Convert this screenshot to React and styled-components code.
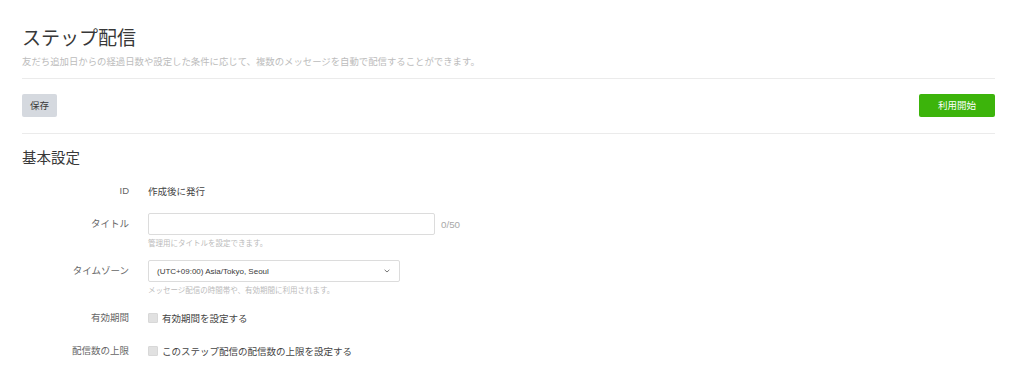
import React from "react";
import styled, { createGlobalStyle } from "styled-components";

const GlobalStyle = createGlobalStyle`
  html, body { margin: 0; padding: 0; background: #fff; }
  body {
    font-family: "Liberation Sans", "Noto Sans CJK JP", sans-serif;
    color: #333;
    -webkit-font-smoothing: antialiased;
  }
`;

const Page = styled.div`
  padding: 0 29px 0 22px;
`;

const Header = styled.header`
  padding-top: 25px;
  padding-bottom: 10px;
  border-bottom: 1px solid #ebebeb;
`;

const Title = styled.h1`
  margin: 0;
  font-family: "Noto Sans CJK JP", sans-serif;
  font-size: 19px;
  font-weight: 400;
  line-height: 24px;
  color: #383838;
`;

const Subtitle = styled.p`
  margin: 6px 0 0;
  font-family: "Noto Sans CJK JP", sans-serif;
  font-size: 9.4px;
  line-height: 13px;
  color: #bcbcbc;
`;

const Toolbar = styled.div`
  display: flex;
  justify-content: space-between;
  align-items: center;
  padding: 15px 0 16px;
  border-bottom: 1px solid #ebebeb;
`;

const Button = styled.button`
  height: 23px;
  min-width: ${(p) => (p.$primary ? "76px" : "35px")};
  padding: 0 8px;
  border: 0;
  border-radius: 2px;
  font-family: "Noto Sans CJK JP", sans-serif;
  font-size: 9.5px;
  line-height: 23px;
  background: ${(p) => (p.$primary ? "#3cb40b" : "#d5d9df")};
  color: ${(p) => (p.$primary ? "#fff" : "#3a3a3a")};
  cursor: pointer;
`;

const Section = styled.section`
  padding-top: 13px;
`;

const SectionTitle = styled.h2`
  margin: 0 0 13px;
  font-family: "Noto Sans CJK JP", sans-serif;
  font-size: 14.5px;
  font-weight: 400;
  line-height: 20px;
  color: #383838;
`;

const Form = styled.div`
  display: grid;
  grid-template-columns: 107px 1fr;
  column-gap: 19px;
  row-gap: 11px;
  align-items: start;
`;

const Label = styled.div`
  text-align: right;
  font-family: "Liberation Sans", "Noto Sans CJK JP", sans-serif;
  font-size: 9.5px;
  line-height: 22px;
  color: #666;
`;

const Field = styled.div`
  display: flex;
  flex-direction: column;
`;

const Line = styled.div`
  display: flex;
  align-items: center;
  min-height: 22px;
`;

const Value = styled.span`
  font-family: "Noto Sans CJK JP", sans-serif;
  font-size: 9.5px;
  line-height: 22px;
  color: #444;
`;

const TextInput = styled.input`
  box-sizing: border-box;
  width: ${(p) => p.$width}px;
  height: 22px;
  margin: 0;
  padding: 0 8px;
  border: 1px solid #dcdcdc;
  border-radius: 2px;
  outline: none;
  font-size: 9px;
`;

const Counter = styled.span`
  margin-left: 6px;
  font-family: "Liberation Sans", sans-serif;
  font-size: 9.8px;
  color: #a8a8a8;
`;

const Help = styled.div`
  margin-top: 2px;
  font-family: "Noto Sans CJK JP", sans-serif;
  font-size: 7.5px;
  line-height: 12px;
  color: #bbbbbb;
`;

const Select = styled.div`
  box-sizing: border-box;
  width: ${(p) => p.$width}px;
  height: 22px;
  display: flex;
  align-items: center;
  justify-content: space-between;
  padding: 0 9px 0 8px;
  border: 1px solid #dcdcdc;
  border-radius: 2px;
  font-family: "Liberation Sans", sans-serif;
  font-size: 8px;
  color: #3a3a3a;
`;

const Check = styled.label`
  display: flex;
  align-items: center;
  gap: 4px;
  font-family: "Noto Sans CJK JP", sans-serif;
  font-size: 9.5px;
  line-height: 22px;
  color: #444;
`;

const Box = styled.span`
  box-sizing: border-box;
  width: 10px;
  height: 10px;
  background: #e1e1e1;
  border: 1px solid #d8d8d8;
  border-radius: 1px;
`;

const Chevron = () => (
  <svg width="6" height="4" viewBox="0 0 6 4" aria-hidden="true">
    <path d="M0.6 0.8 L3 3 L5.4 0.8" fill="none" stroke="#777" strokeWidth="1" />
  </svg>
);

export default function App() {
  return (
    <>
      <GlobalStyle />
      <Page>
        <Header>
          <Title>ステップ配信</Title>
          <Subtitle>
            友だち追加日からの経過日数や設定した条件に応じて、複数のメッセージを自動で配信することができます。
          </Subtitle>
        </Header>
        <Toolbar>
          <Button>保存</Button>
          <Button $primary>利用開始</Button>
        </Toolbar>
        <Section>
          <SectionTitle>基本設定</SectionTitle>
          <Form>
            <Label>ID</Label>
            <Field>
              <Line>
                <Value>作成後に発行</Value>
              </Line>
            </Field>

            <Label>タイトル</Label>
            <Field>
              <Line>
                <TextInput $width={287} />
                <Counter>0/50</Counter>
              </Line>
              <Help>管理用にタイトルを設定できます。</Help>
            </Field>

            <Label>タイムゾーン</Label>
            <Field>
              <Select $width={252}>
                <span>(UTC+09:00) Asia/Tokyo, Seoul</span>
                <Chevron />
              </Select>
              <Help>メッセージ配信の時間帯や、有効期間に利用されます。</Help>
            </Field>

            <Label>有効期間</Label>
            <Field>
              <Check>
                <Box />
                有効期間を設定する
              </Check>
            </Field>

            <Label>配信数の上限</Label>
            <Field>
              <Check>
                <Box />
                このステップ配信の配信数の上限を設定する
              </Check>
            </Field>
          </Form>
        </Section>
      </Page>
    </>
  );
}
